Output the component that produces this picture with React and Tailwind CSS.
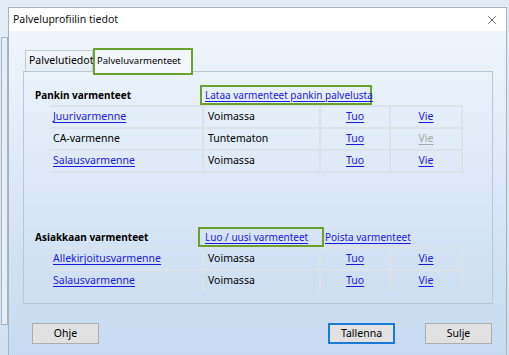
import { X } from 'lucide-react';

const font = { fontFamily: '"Noto Sans", "Open Sans", sans-serif' };

function Link({ children, disabled }) {
  return (
    <span className={`underline underline-offset-2 whitespace-nowrap ${disabled ? 'text-[#a8a8a8]' : 'text-[#1a1ae0]'}`}>
      {children}
    </span>
  );
}

function CertRow({ name, status, linkName, vieDisabled }) {
  return (
    <div className="grid grid-cols-[154px_117px_70px_72px] h-[22px] border-t-2 border-[#dde2e8]">
      <div className="flex items-center pl-[3px] border-r-2 border-[#dde2e8]">
        {linkName ? <Link>{name}</Link> : <span>{name}</span>}
      </div>
      <div className="flex items-center pl-[4px] border-r-2 border-[#dde2e8]">{status}</div>
      <div className="flex items-center justify-center border-r-2 border-[#dde2e8]">
        <Link>Tuo</Link>
      </div>
      <div className="flex items-center justify-center border-r-2 border-[#dde2e8]">
        <Link disabled={vieDisabled}>Vie</Link>
      </div>
    </div>
  );
}

function Button({ children, primary }) {
  return (
    <button
      className={`w-[67px] h-[21px] bg-[#e1e1e1] text-[10.5px] text-black flex items-center justify-center ${
        primary ? 'border-2 border-[#1b7ad6]' : 'border border-[#adadad]'
      }`}
    >
      {children}
    </button>
  );
}

export default function App() {
  return (
    <div className="relative w-[509px] h-[355px] overflow-hidden bg-gradient-to-b from-[#e4edf6] to-[#d3e1f0] text-[10.5px] text-black whitespace-nowrap" style={font}>
      {/* window behind, left edge */}
      <div className="absolute left-[1px] top-[37px] w-[7px] h-[288px] border border-[#a9b4c0] bg-[#e6eef7]" />

      <div className="relative ml-[8px] mt-[7px] w-[499px] h-[360px] border border-[#a7b2bd] flex flex-col">
        {/* title bar */}
        <div className="h-[23px] bg-white flex items-center justify-between pl-[4px] pr-[7px]">
          <span className="text-[10.5px] text-[#111]">Palveluprofiilin tiedot</span>
          <X size={14} strokeWidth={1.2} className="text-[#222]" />
        </div>

        {/* body */}
        <div className="flex-1 bg-gradient-to-b from-[#eff5fb] to-[#c5d9ef] pl-[14px] pr-[13px] pt-[17px] flex flex-col">
          {/* tabs */}
          <div className="flex items-end h-[23px] pl-[2px] relative z-10">
            <div className="h-[21px] w-[68px] border border-b-0 border-[#c3ccd6] bg-gradient-to-b from-[#f4f7fa] to-[#e6edf5] flex items-center pl-[3px] text-[10.5px]">
              Palvelutiedot
            </div>
            <div className="h-[27px] w-[100px] -mb-[4px] border-2 border-[#68a22d] bg-[#f3f7fb] flex items-center pl-[2px] text-[9.5px]">
              Palveluvarmenteet
            </div>
          </div>

          {/* panel */}
          <div className="h-[233px] border border-[#b7c7d8] pl-[11px] pt-[13px]">
            <div className="flex items-center h-[20px]">
              <span className="w-[165px] font-bold text-[10px]">Pankin varmenteet</span>
              <span className="border-2 border-[#68a22d] h-[20px] w-[172px] flex items-center pl-[3px] text-[10px]">
                <Link>Lataa varmenteet pankin palvelusta</Link>
              </span>
            </div>
            <div className="ml-[15px] border-b-2 border-[#dde2e8] w-[413px]">
              <CertRow name="Juurivarmenne" status="Voimassa" linkName />
              <CertRow name="CA-varmenne" status="Tuntematon" vieDisabled />
              <CertRow name="Salausvarmenne" status="Voimassa" linkName />
            </div>

            <div className="flex items-center h-[20px] mt-[54px] text-[10px]">
              <span className="w-[163px] font-bold">Asiakkaan varmenteet</span>
              <span className="border-2 border-[#68a22d] h-[20px] w-[126px] flex items-center pl-[5px]">
                <Link>Luo / uusi varmenteet</Link>
              </span>
              <span className="ml-[1px]">
                <Link>Poista varmenteet</Link>
              </span>
            </div>
            <div className="ml-[15px] w-[413px]">
              <CertRow name="Allekirjoitusvarmenne" status="Voimassa" linkName />
              <CertRow name="Salausvarmenne" status="Voimassa" linkName />
            </div>
          </div>

          {/* buttons */}
          <div className="flex mt-[19px] pl-[9px]">
            <Button>Ohje</Button>
            <div className="ml-[229px]">
              <Button primary>Tallenna</Button>
            </div>
            <div className="ml-[30px]">
              <Button>Sulje</Button>
            </div>
          </div>
        </div>
      </div>
    </div>
  );
}
